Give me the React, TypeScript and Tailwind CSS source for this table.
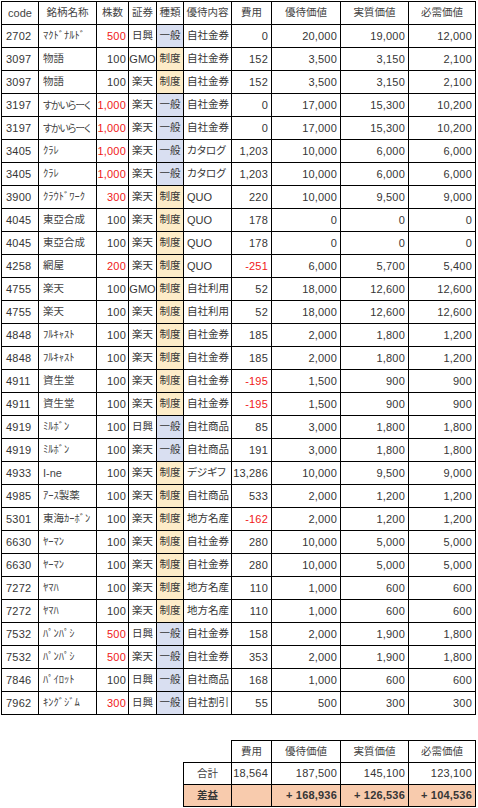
type Row = {
  code: string;
  name: string;
  shares: string;
  broker: string;
  kind: "一般" | "制度";
  content: string;
  cost: string;
  value: string;
  real: string;
  need: string;
};

const rows: Row[] = [
  { code: "2702", name: "ﾏｸﾄﾞﾅﾙﾄﾞ", shares: "500", broker: "日興", kind: "一般", content: "自社金券", cost: "0", value: "20,000", real: "19,000", need: "12,000" },
  { code: "3097", name: "物語", shares: "100", broker: "GMO", kind: "制度", content: "自社金券", cost: "152", value: "3,500", real: "3,150", need: "2,100" },
  { code: "3097", name: "物語", shares: "100", broker: "楽天", kind: "制度", content: "自社金券", cost: "152", value: "3,500", real: "3,150", need: "2,100" },
  { code: "3197", name: "すかいらーく", shares: "1,000", broker: "楽天", kind: "一般", content: "自社金券", cost: "0", value: "17,000", real: "15,300", need: "10,200" },
  { code: "3197", name: "すかいらーく", shares: "1,000", broker: "楽天", kind: "一般", content: "自社金券", cost: "0", value: "17,000", real: "15,300", need: "10,200" },
  { code: "3405", name: "ｸﾗﾚ", shares: "1,000", broker: "楽天", kind: "一般", content: "カタログ", cost: "1,203", value: "10,000", real: "6,000", need: "6,000" },
  { code: "3405", name: "ｸﾗﾚ", shares: "1,000", broker: "楽天", kind: "一般", content: "カタログ", cost: "1,203", value: "10,000", real: "6,000", need: "6,000" },
  { code: "3900", name: "ｸﾗｳﾄﾞﾜｰｸ", shares: "300", broker: "楽天", kind: "制度", content: "QUO", cost: "220", value: "10,000", real: "9,500", need: "9,000" },
  { code: "4045", name: "東亞合成", shares: "100", broker: "楽天", kind: "制度", content: "QUO", cost: "178", value: "0", real: "0", need: "0" },
  { code: "4045", name: "東亞合成", shares: "100", broker: "楽天", kind: "制度", content: "QUO", cost: "178", value: "0", real: "0", need: "0" },
  { code: "4258", name: "網屋", shares: "200", broker: "楽天", kind: "制度", content: "QUO", cost: "-251", value: "6,000", real: "5,700", need: "5,400" },
  { code: "4755", name: "楽天", shares: "100", broker: "GMO", kind: "制度", content: "自社利用", cost: "52", value: "18,000", real: "12,600", need: "12,600" },
  { code: "4755", name: "楽天", shares: "100", broker: "楽天", kind: "制度", content: "自社利用", cost: "52", value: "18,000", real: "12,600", need: "12,600" },
  { code: "4848", name: "ﾌﾙｷｬｽﾄ", shares: "100", broker: "楽天", kind: "制度", content: "自社金券", cost: "185", value: "2,000", real: "1,800", need: "1,200" },
  { code: "4848", name: "ﾌﾙｷｬｽﾄ", shares: "100", broker: "楽天", kind: "制度", content: "自社金券", cost: "185", value: "2,000", real: "1,800", need: "1,200" },
  { code: "4911", name: "資生堂", shares: "100", broker: "楽天", kind: "制度", content: "自社金券", cost: "-195", value: "1,500", real: "900", need: "900" },
  { code: "4911", name: "資生堂", shares: "100", broker: "楽天", kind: "制度", content: "自社金券", cost: "-195", value: "1,500", real: "900", need: "900" },
  { code: "4919", name: "ﾐﾙﾎﾞﾝ", shares: "100", broker: "日興", kind: "一般", content: "自社商品", cost: "85", value: "3,000", real: "1,800", need: "1,800" },
  { code: "4919", name: "ﾐﾙﾎﾞﾝ", shares: "100", broker: "楽天", kind: "一般", content: "自社商品", cost: "191", value: "3,000", real: "1,800", need: "1,800" },
  { code: "4933", name: "I-ne", shares: "100", broker: "楽天", kind: "制度", content: "デジギフ", cost: "13,286", value: "10,000", real: "9,500", need: "9,000" },
  { code: "4985", name: "ｱｰｽ製薬", shares: "100", broker: "楽天", kind: "制度", content: "自社商品", cost: "533", value: "2,000", real: "1,200", need: "1,200" },
  { code: "5301", name: "東海ｶｰﾎﾞﾝ", shares: "100", broker: "楽天", kind: "制度", content: "地方名産", cost: "-162", value: "2,000", real: "1,200", need: "1,200" },
  { code: "6630", name: "ﾔｰﾏﾝ", shares: "100", broker: "楽天", kind: "制度", content: "自社金券", cost: "280", value: "10,000", real: "5,000", need: "5,000" },
  { code: "6630", name: "ﾔｰﾏﾝ", shares: "100", broker: "楽天", kind: "制度", content: "自社金券", cost: "280", value: "10,000", real: "5,000", need: "5,000" },
  { code: "7272", name: "ﾔﾏﾊ", shares: "100", broker: "楽天", kind: "制度", content: "地方名産", cost: "110", value: "1,000", real: "600", need: "600" },
  { code: "7272", name: "ﾔﾏﾊ", shares: "100", broker: "楽天", kind: "制度", content: "地方名産", cost: "110", value: "1,000", real: "600", need: "600" },
  { code: "7532", name: "ﾊﾟﾝﾊﾟｼ", shares: "500", broker: "日興", kind: "一般", content: "自社金券", cost: "158", value: "2,000", real: "1,900", need: "1,800" },
  { code: "7532", name: "ﾊﾟﾝﾊﾟｼ", shares: "500", broker: "楽天", kind: "一般", content: "自社金券", cost: "353", value: "2,000", real: "1,900", need: "1,800" },
  { code: "7846", name: "ﾊﾟｲﾛｯﾄ", shares: "100", broker: "日興", kind: "一般", content: "自社商品", cost: "168", value: "1,000", real: "600", need: "600" },
  { code: "7962", name: "ｷﾝｸﾞｼﾞﾑ", shares: "300", broker: "日興", kind: "一般", content: "自社割引", cost: "55", value: "500", real: "300", need: "300" },
];

const headers = ["code", "銘柄名称", "株数", "証券", "種類", "優待内容", "費用", "優待価値", "実質価値", "必需価値"];

const cell = "h-[23px] border-r border-b border-black flex items-center whitespace-nowrap";
const num = "justify-end pr-[3px] tracking-[0.2px]";
const red = "text-[#f01818]";
const isAscii = (s: string) => /^[\x00-\x7f]*$/.test(s);
const jp = (s: string) => (isAscii(s) ? "text-[11px]" : "text-[10.5px]");

// long full-width names need squeezing to fit the column
const nameClass = (s: string) => {
  if (isAscii(s)) return "text-[11px]";
  if (s.length >= 6 && !/[\uff61-\uff9f]/.test(s)) return "text-[10px] tracking-[-1.1px]";
  return "text-[10.5px]";
};

const App = () => {
  return (
    <div className="w-[478px] h-[808px] bg-white font-['Liberation_Sans','Noto_Sans_CJK_JP',sans-serif] text-[11px] text-[#363636] [font-feature-settings:'palt']">
      <div className="ml-px pt-px">
        <div className="grid w-max grid-cols-[37px_58px_32px_28px_27px_48px_40px_69px_68px_67px] border-l border-t border-black">
          {headers.map((h) => (
            <div key={h} className={`${cell} justify-center text-[#444] ${jp(h)}`}>
              {h}
            </div>
          ))}
          {rows.map((r, i) => (
            <div key={i} className="contents">
              <div className={`${cell} pl-[4px] tracking-[0.2px]`}>{r.code}</div>
              <div className={`${cell} pl-[4px] ${nameClass(r.name)} text-[#444]`}>{r.name}</div>
              <div className={`${cell} justify-end pr-[2px] tracking-[0.2px] ${r.shares !== "100" ? red : ""}`}>{r.shares}</div>
              <div className={`${cell} justify-center ${jp(r.broker)}`}>{r.broker}</div>
              <div
                className={`${cell} justify-center text-[10.5px] ${
                  r.kind === "一般" ? "bg-[#d9dff1]" : "bg-[#fdecc8]"
                }`}
              >
                {r.kind}
              </div>
              <div className={`${cell} pl-[3px] ${jp(r.content)}`}>{r.content}</div>
              <div className={`${cell} ${num} ${r.cost.startsWith("-") ? red : ""}`}>{r.cost}</div>
              <div className={`${cell} ${num}`}>{r.value}</div>
              <div className={`${cell} ${num}`}>{r.real}</div>
              <div className={`${cell} ${num}`}>{r.need}</div>
            </div>
          ))}
        </div>
      </div>

      <div className="ml-[183px] mt-[25px] grid w-max grid-cols-[49px_40px_69px_68px_67px]">
        <div className="h-[23px] border-r border-b border-black" />
        {["費用", "優待価値", "実質価値", "必需価値"].map((h) => (
          <div key={h} className="h-[23px] border-t border-r border-b border-black flex items-center justify-center text-[10.5px] text-[#444]">
            {h}
          </div>
        ))}

        <div className="h-[22px] border-l border-r border-b border-black flex items-center justify-center text-[10.5px] text-[#444]">
          合計
        </div>
        <div className={`h-[22px] border-r border-b border-black flex items-center ${num}`}>18,564</div>
        <div className={`h-[22px] border-r border-b border-black flex items-center ${num}`}>187,500</div>
        <div className={`h-[22px] border-r border-b border-black flex items-center ${num}`}>145,100</div>
        <div className={`h-[22px] border-r border-b border-black flex items-center ${num}`}>123,100</div>

        <div className="h-[22px] border-l border-r border-b border-black bg-[#f8cbad] flex items-center justify-center text-[10.5px] font-bold">
          差益
        </div>
        <div className="h-[22px] border-r border-b border-black bg-[#f8cbad]" />
        <div className={`h-[22px] border-r border-b border-black bg-[#f8cbad] flex items-center font-bold ${num}`}>+ 168,936</div>
        <div className={`h-[22px] border-r border-b border-black bg-[#f8cbad] flex items-center font-bold ${num}`}>+ 126,536</div>
        <div className={`h-[22px] border-r border-b border-black bg-[#f8cbad] flex items-center font-bold ${num}`}>+ 104,536</div>
      </div>
    </div>
  );
};

export default App;
